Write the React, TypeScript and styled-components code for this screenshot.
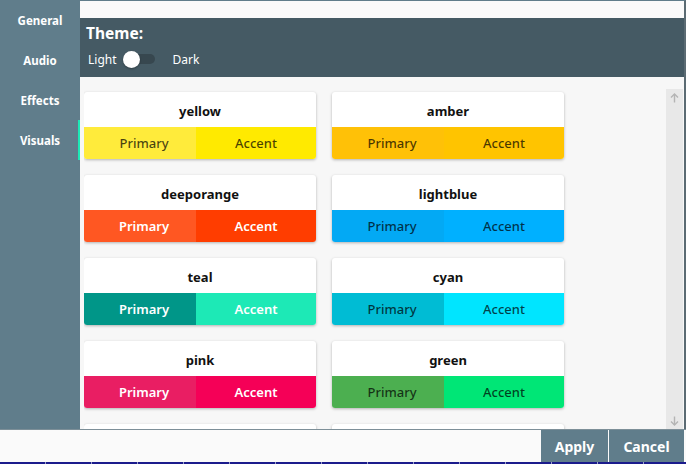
import React from 'react';
import styled, { createGlobalStyle } from 'styled-components';

const GlobalStyle = createGlobalStyle`
  html, body {
    margin: 0;
    padding: 0;
    background: #ffffff;
  }
  * {
    box-sizing: border-box;
  }
`;

const Window = styled.div`
  width: 686px;
  height: 464px;
  display: flex;
  flex-direction: column;
  font-family: "Noto Sans", "Open Sans", sans-serif;
  overflow: hidden;
  background: #fafafa;
`;

const Body = styled.div`
  display: flex;
  height: 429px;
`;

const Sidebar = styled.nav`
  width: 80px;
  flex-shrink: 0;
  background: #607d8b;
  display: flex;
  flex-direction: column;
`;

const NavItem = styled.div<{ $active?: boolean }>`
  height: 40px;
  display: flex;
  align-items: center;
  justify-content: center;
  color: #ffffff;
  font-size: 11.5px;
  font-weight: 700;
  border-right: 2px solid ${(p) => (p.$active ? '#1de9b6' : 'transparent')};
  padding-left: 2px;
`;

const Main = styled.div`
  flex: 1;
  display: flex;
  flex-direction: column;
  border-top: 1px solid #607d8b;
  border-right: 2px solid #5b6b73;
  box-shadow: inset 2px 0 2px -1px rgba(0, 0, 0, 0.18);
  min-width: 0;
`;

const TopGap = styled.div`
  height: 17px;
  background: #fafafa;
`;

const Header = styled.header`
  height: 59px;
  background: #455a64;
  color: #ffffff;
  padding: 4px 6px 0;
  display: flex;
  flex-direction: column;
`;

const HeaderTitle = styled.div`
  font-size: 15.5px;
  font-weight: 700;
  line-height: 22px;
`;

const ToggleRow = styled.div`
  display: flex;
  align-items: center;
  margin-top: 5px;
  font-size: 12px;
  padding-left: 2px;
  height: 20px;
`;

const ToggleLabel = styled.span<{ $gap: number }>`
  margin-right: ${(p) => p.$gap}px;
`;

const Switch = styled.span`
  position: relative;
  width: 32px;
  height: 18px;
  display: inline-flex;
  align-items: center;
  margin-right: 18px;
`;

const Track = styled.span`
  margin-left: 4px;
  width: 28px;
  height: 10px;
  border-radius: 5px;
  background: #37474f;
`;

const Thumb = styled.span`
  position: absolute;
  left: 0;
  top: 0.5px;
  width: 17px;
  height: 17px;
  border-radius: 50%;
  background: #ffffff;
  box-shadow: 0 1px 2px rgba(0, 0, 0, 0.3);
`;

const Content = styled.div`
  flex: 1;
  display: flex;
  background: #f7f7f7;
  padding: 12px 1px 0 4px;
  min-height: 0;
`;

const Grid = styled.div`
  flex: 1;
  display: grid;
  grid-template-columns: repeat(2, 232px);
  grid-auto-rows: 67px;
  column-gap: 16px;
  row-gap: 16px;
  padding-top: 3px;
  overflow: hidden;
  align-content: start;
`;

const Card = styled.div`
  background: #ffffff;
  border-radius: 3px;
  box-shadow: 0 1px 3px rgba(0, 0, 0, 0.28);
  display: flex;
  flex-direction: column;
  overflow: hidden;
`;

const CardTitle = styled.div`
  height: 35px;
  display: flex;
  align-items: center;
  justify-content: center;
  font-size: 13px;
  font-weight: 700;
  color: #111111;
  padding-top: 3px;
`;

const Swatches = styled.div`
  flex: 1;
  display: grid;
  grid-template-columns: 112px 1fr;
`;

const Swatch = styled.div<{ $bg: string; $light: boolean; $shift?: number }>`
  display: flex;
  align-items: center;
  justify-content: center;
  padding-left: ${(p) => p.$shift ?? 0}px;
  background: ${(p) => p.$bg};
  color: ${(p) => (p.$light ? '#ffffff' : 'rgba(0, 0, 0, 0.72)')};
  font-size: 13px;
  font-weight: ${(p) => (p.$light ? 600 : 500)};
`;

const Scrollbar = styled.div`
  width: 17px;
  flex-shrink: 0;
  background: #e8e8e8;
  display: flex;
  flex-direction: column;
  justify-content: space-between;
  align-items: center;
  padding: 4px 0 3px;
  margin-left: auto;
`;

const Footer = styled.footer`
  height: 33px;
  display: flex;
  justify-content: flex-end;
  background: #fafafa;
  border-top: 1px solid #7d8f98;
  padding-right: 2px;
`;

const Button = styled.button<{ $w: number }>`
  height: 32px;
  border: none;
  background: #607d8b;
  color: #ffffff;
  font-family: "Noto Sans", "Open Sans", sans-serif;
  font-size: 14px;
  font-weight: 700;
  padding: 0;
  width: ${(p) => p.$w}px;
  margin-left: 1px;
  cursor: pointer;
`;

const Taskbar = styled.div`
  height: 2px;
  background: repeating-linear-gradient(
    90deg,
    #1b1b8c 0px,
    #1b1b8c 45px,
    #9aa0c8 45px,
    #9aa0c8 46px
  );
`;

type Palette = {
  name: string;
  primary: string;
  accent: string;
  light: boolean;
};

const palettes: Palette[] = [
  { name: 'yellow', primary: '#ffeb3b', accent: '#ffea00', light: false },
  { name: 'amber', primary: '#ffc107', accent: '#ffc400', light: false },
  { name: 'deeporange', primary: '#ff5722', accent: '#ff3d00', light: true },
  { name: 'lightblue', primary: '#03a9f4', accent: '#00b0ff', light: false },
  { name: 'teal', primary: '#009688', accent: '#1de9b6', light: true },
  { name: 'cyan', primary: '#00bcd4', accent: '#00e5ff', light: false },
  { name: 'pink', primary: '#e91e63', accent: '#f50057', light: true },
  { name: 'green', primary: '#4caf50', accent: '#00e676', light: false },
  { name: 'purple', primary: '#9c27b0', accent: '#d500f9', light: true },
  { name: 'indigo', primary: '#3f51b5', accent: '#3d5afe', light: true },
];

const Arrow = ({ down }: { down?: boolean }) => (
  <svg width="9" height="10" viewBox="0 0 9 10" fill="none">
    <g stroke="#b4b4b4" strokeWidth="1.4" transform={down ? 'rotate(180 4.5 5)' : undefined}>
      <path d="M4.5 9.5V1" />
      <path d="M1 4.5L4.5 1L8 4.5" />
    </g>
  </svg>
);

const App: React.FC = () => {
  return (
    <>
      <GlobalStyle />
      <Window>
        <Body>
          <Sidebar>
            <NavItem>General</NavItem>
            <NavItem>Audio</NavItem>
            <NavItem>Effects</NavItem>
            <NavItem $active>Visuals</NavItem>
          </Sidebar>
          <Main>
            <TopGap />
            <Header>
              <HeaderTitle>Theme:</HeaderTitle>
              <ToggleRow>
                <ToggleLabel $gap={6}>Light</ToggleLabel>
                <Switch>
                  <Track />
                  <Thumb />
                </Switch>
                <ToggleLabel $gap={0}>Dark</ToggleLabel>
              </ToggleRow>
            </Header>
            <Content>
              <Grid>
                {palettes.map((p) => (
                  <Card key={p.name}>
                    <CardTitle>{p.name}</CardTitle>
                    <Swatches>
                      <Swatch $bg={p.primary} $light={p.light} $shift={8}>
                        Primary
                      </Swatch>
                      <Swatch $bg={p.accent} $light={p.light}>
                        Accent
                      </Swatch>
                    </Swatches>
                  </Card>
                ))}
              </Grid>
              <Scrollbar>
                <Arrow />
                <Arrow down />
              </Scrollbar>
            </Content>
          </Main>
        </Body>
        <Footer>
          <Button $w={67}>Apply</Button>
          <Button $w={75}>Cancel</Button>
        </Footer>
        <Taskbar />
      </Window>
    </>
  );
};

export default App;
